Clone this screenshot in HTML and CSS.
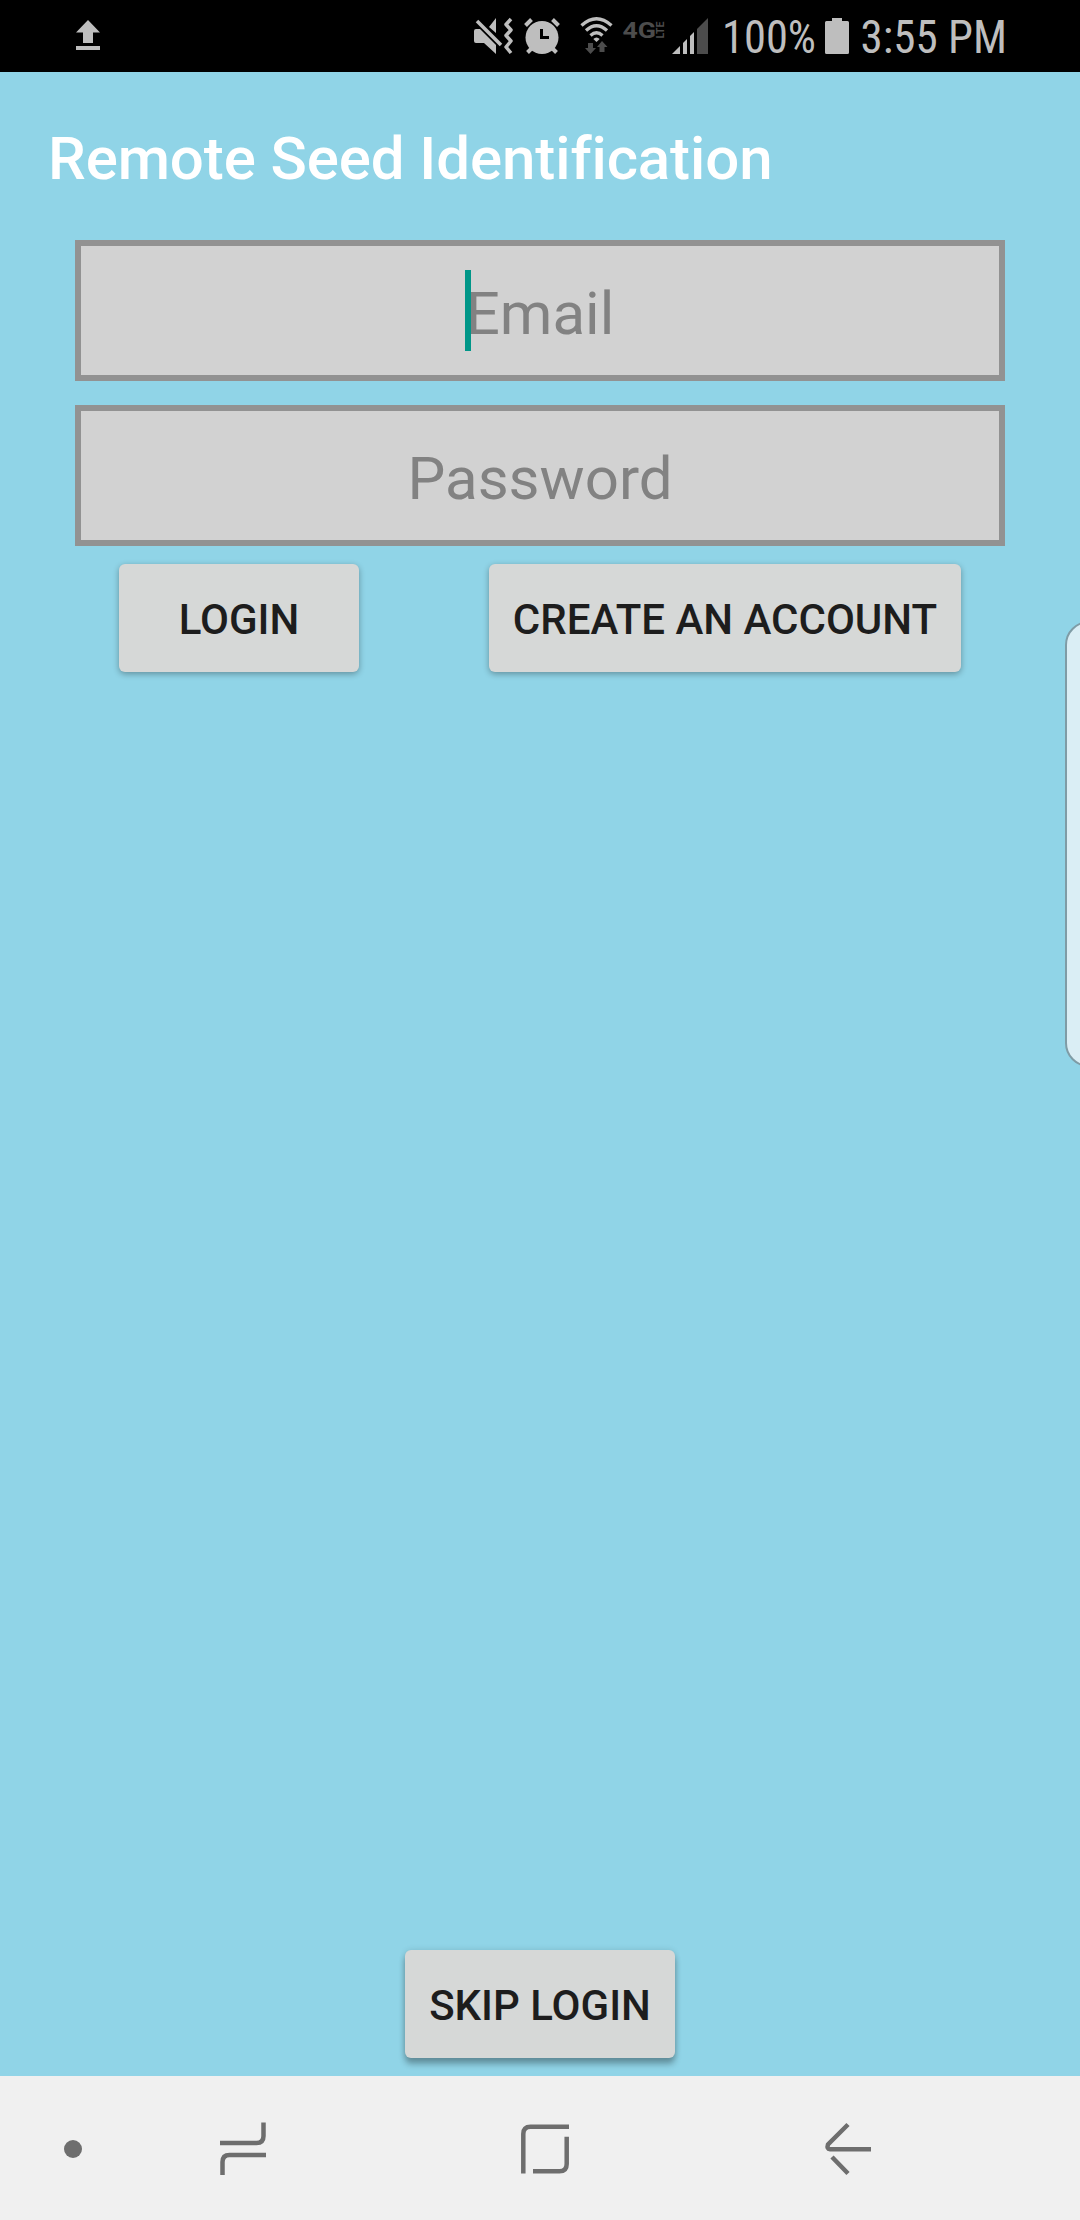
FILE: index.html
```html
<!DOCTYPE html>
<html lang="en">
<head>
<meta charset="utf-8">
<title>Remote Seed Identification</title>
<link rel="stylesheet" href="styles.css">
</head>
<body>
<div class="screen">
  <header class="status">
    <svg class="upload" width="24" height="36" viewBox="76 18 24 36"><path d="M88 20L100 32.5H93V43H83V32.5H76ZM76 46H100V50H76Z"/></svg>
    <svg class="mute" width="40" height="40" viewBox="474 16 40 40">
      <path d="M474 31Q474 29 476 29H480L496 45V54L484 43H476Q474 43 474 41ZM489 27L496 18V33Z"/>
      <path class="line" d="M477 21L501 45" stroke-width="3.5"/>
      <path class="line" d="M511 19L506 24.500L511 30L506 35.500L511 41L506 47L511 53" stroke-width="3.500" stroke-linejoin="round"/>
    </svg>
    <svg class="alarm" width="38" height="40" viewBox="523 16 38 40">
      <circle cx="542" cy="37.500" r="16.500"/>
      <path class="line" d="M525.500 25.500L531.500 19.500M558.500 25.500L552.500 19.500M532 48L527.500 52.500M552 48L556.500 52.500" stroke-width="4"/>
      <path d="M541.500 29V37.500H549" fill="none" stroke="#000" stroke-width="3"/>
    </svg>
    <svg class="wifi" width="34" height="40" viewBox="580 16 34 40">
      <path class="line" d="M581.500 25.500Q596.500 12 611.500 25.500M586 30.500Q596.500 21 607 30.500M590.500 35.500Q596.500 30 602.500 35.500" stroke-width="3.300"/>
      <path d="M593.300 39Q596.500 36 599.700 39L596.500 42Z"/>
      <path class="dim" d="M588 43H593V48H596L590.500 54L585 48H588ZM602 41L607.500 47H604.500V52H599.500V47H597Z"/>
    </svg>
    <svg class="lte" width="46" height="40" viewBox="621 10 46 40">
      <text class="dim" x="622.500" y="37.800" font-size="22" font-weight="700" textLength="33.500" lengthAdjust="spacingAndGlyphs">4G</text>
      <text class="dim" transform="translate(663.700 38.500) rotate(-90)" font-size="10" font-weight="700" textLength="17" lengthAdjust="spacingAndGlyphs">LTE</text>
    </svg>
    <svg class="signal" width="36" height="36" viewBox="672 18 36 36">
      <path d="M672 54L680 46V54ZM683 54V43L687 39V54ZM690 54V36L694 32V54Z"/>
      <path class="dim" d="M697 54V29L708 18V54Z"/>
    </svg>
    <svg class="percent" width="98" height="66" viewBox="720 4 98 66"><text x="722" y="53" font-size="46" textLength="94" lengthAdjust="spacingAndGlyphs">100%</text></svg>
    <svg class="battery" width="24" height="36" viewBox="825 18 24 36"><path d="M832 18H842V21H847.500Q849 21 849 22.500V52.500Q849 54 847.500 54H826.500Q825 54 825 52.500V22.500Q825 21 826.500 21H832Z"/></svg>
    <svg class="clock" width="152" height="66" viewBox="858 4 152 66"><text x="860.500" y="53" font-size="46" textLength="146.500" lengthAdjust="spacingAndGlyphs">3:55 PM</text></svg>
  </header>
  <main class="content">
    <h1 class="title">Remote Seed Identification</h1>
    <form class="form">
      <div class="field"><span class="hint">Email<i class="caret"></i></span></div>
      <div class="field"><span class="hint">Password</span></div>
    </form>
    <div class="actions">
      <button class="btn login" type="button">LOGIN</button>
      <button class="btn create" type="button">CREATE AN ACCOUNT</button>
    </div>
    <button class="btn skip" type="button">SKIP LOGIN</button>
  </main>
  <nav class="nav">
    <span class="dot"></span>
    <svg class="recents" width="46" height="54" viewBox="220 2122 46 54"><path d="M220 2143H256.500Q263.500 2143 263.500 2136V2122.500M266 2155H229.500Q222.500 2155 222.500 2162V2175"/></svg>
    <svg class="home" width="49" height="51" viewBox="521 2123 49 51"><path d="M523.300 2173.500V2134Q523.300 2126.700 530.500 2126.700H569M566.700 2136.700V2164Q566.700 2171.300 559.500 2171.300H533"/></svg>
    <svg class="back" width="47" height="54" viewBox="824 2122 47 54"><path d="M848 2124.500L828 2144.500Q826.500 2149 830 2149.200H871M832 2157L848 2173.500"/></svg>
  </nav>
  <div class="edge"></div>
</div>
</body>
</html>
```
FILE: styles.css
```css
* { box-sizing: border-box; }
body { margin: 0; font-family: Roboto, sans-serif; }
.screen { position: relative; display: flex; flex-direction: column; width: 1080px; height: 2220px; overflow: hidden; background: #90d4e7; }
svg { display: block; flex: none; }

.status { display: flex; align-items: flex-start; height: 72px; padding: 4px 0 0 76px; background: #000; fill: #bebebe; }
.status text { font-family: "Roboto Condensed", Roboto, sans-serif; }
.status .line { fill: none; stroke: #bebebe; }
.status .dim { fill: #4c4c4c; }
.status text.dim { font-family: Roboto, sans-serif; }
.upload { margin-top: 14px; }
.mute { margin: 12px 0 0 374px; }
.alarm { margin: 12px 0 0 9px; }
.wifi { margin: 12px 0 0 19px; }
.lte { margin: 6px 0 0 7px; }
.signal { margin: 14px 0 0 5px; }
.percent { margin-left: 12px; }
.battery { margin: 14px 0 0 7px; }
.clock { margin-left: 9px; }

.content { display: flex; flex: 1; flex-direction: column; }
.title { height: 168px; margin: 0; padding: 51px 48px 0; color: #fff; font-size: 60px; font-weight: 500; line-height: 72px; letter-spacing: -.1px; font-variant-ligatures: common-ligatures; }
.form { display: grid; gap: 24px; margin: 0 75px; }
.field { display: flex; align-items: center; justify-content: center; height: 141px; padding-top: 6px; border: 6px solid #929292; background: #d2d2d2; color: #828282; font-size: 60px; line-height: 72px; }
.hint { position: relative; }
.caret { position: absolute; top: -8px; left: -1px; width: 6px; height: 81px; background: #009688; }
.actions { display: flex; justify-content: space-between; margin: 18px 119px 0; }
.btn { height: 108px; padding: 4px 0 0; border: 0; border-radius: 6px; background: #d6d8d7; box-shadow: 0 2px 6px rgba(0, 0, 0, .32); color: #1d1d1d; font-family: inherit; font-size: 42px; font-weight: 500; line-height: 50px; white-space: nowrap; }
.login { width: 240px; }
.create { width: 472px; }
.skip { align-self: center; width: 270px; margin: auto 0 18px; box-shadow: 0 6px 6px rgba(0, 0, 0, .3), 0 0 6px rgba(0, 0, 0, .12); }

.nav { display: flex; align-items: flex-start; height: 144px; padding: 46px 0 0 64px; background: #f0f0f0; fill: none; stroke: #6e6e6e; stroke-width: 4.5; }
.dot { width: 18px; height: 18px; margin-top: 18px; border-radius: 50%; background: #6e6e6e; }
.recents { margin-left: 138px; }
.home { margin: 1px 0 0 255px; }
.back { margin-left: 254px; }

.edge { position: absolute; top: 621px; left: 1065px; width: 48px; height: 446px; border: 2px solid #7f9ca6; border-radius: 24px; background: #daeef5; }
```
